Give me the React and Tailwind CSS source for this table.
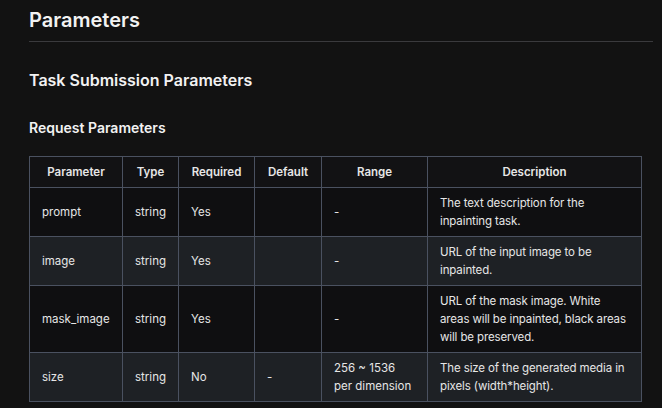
const rows = [
  { name: 'prompt', type: 'string', required: 'Yes', def: '', range: '-', desc: 'The text description for the inpainting task.' },
  { name: 'image', type: 'string', required: 'Yes', def: '', range: '-', desc: 'URL of the input image to be inpainted.' },
  { name: 'mask_image', type: 'string', required: 'Yes', def: '', range: '-', desc: 'URL of the mask image. White areas will be inpainted, black areas will be preserved.' },
  { name: 'size', type: 'string', required: 'No', def: '-', range: '256 ~ 1536 per dimension', desc: 'The size of the generated media in pixels (width*height).' },
];

const cell = 'border border-[#4a5160] px-3 py-[6px] align-middle';

export default function App() {
  return (
    <div className="min-h-screen bg-[#121212] pl-[29px] pr-[9px] text-[#e6e6e6]" style={{ fontFamily: 'Inter, "Noto Sans", sans-serif' }}>
      <h1 className="pt-[6px] pb-[7px] text-[20px] font-semibold leading-[28px] text-[#f2f2f2]">Parameters</h1>
      <hr className="border-[#3a3a3d]" />
      <h2 className="mt-[26px] text-[16px] font-semibold leading-[24px] text-[#f2f2f2]">Task Submission Parameters</h2>
      <h3 className="mt-[26px] text-[14px] font-semibold leading-[20px] text-[#f2f2f2]">Request Parameters</h3>
      <table className="mt-[18px] w-[612px] table-fixed border-collapse text-[11.5px] leading-[18px]">
        <colgroup>
          <col className="w-[93px]" />
          <col className="w-[56px]" />
          <col className="w-[76px]" />
          <col className="w-[67px]" />
          <col className="w-[106px]" />
          <col className="w-[214px]" />
        </colgroup>
        <thead>
          <tr className="bg-[#121214]">
            <th className={`${cell} font-semibold`}>Parameter</th>
            <th className={`${cell} font-semibold`}>Type</th>
            <th className={`${cell} font-semibold`}>Required</th>
            <th className={`${cell} font-semibold`}>Default</th>
            <th className={`${cell} font-semibold`}>Range</th>
            <th className={`${cell} font-semibold`}>Description</th>
          </tr>
        </thead>
        <tbody>
          {rows.map((r, i) => (
            <tr key={r.name} className={i % 2 === 1 ? 'bg-[#1e2125]' : 'bg-[#0f0f11]'}>
              <td className={cell}>{r.name}</td>
              <td className={cell}>{r.type}</td>
              <td className={cell}>{r.required}</td>
              <td className={cell}>{r.def}</td>
              <td className={cell}>{r.range}</td>
              <td className={`${cell} tracking-[-0.12px]`}>{r.desc}</td>
            </tr>
          ))}
        </tbody>
      </table>
    </div>
  );
}
